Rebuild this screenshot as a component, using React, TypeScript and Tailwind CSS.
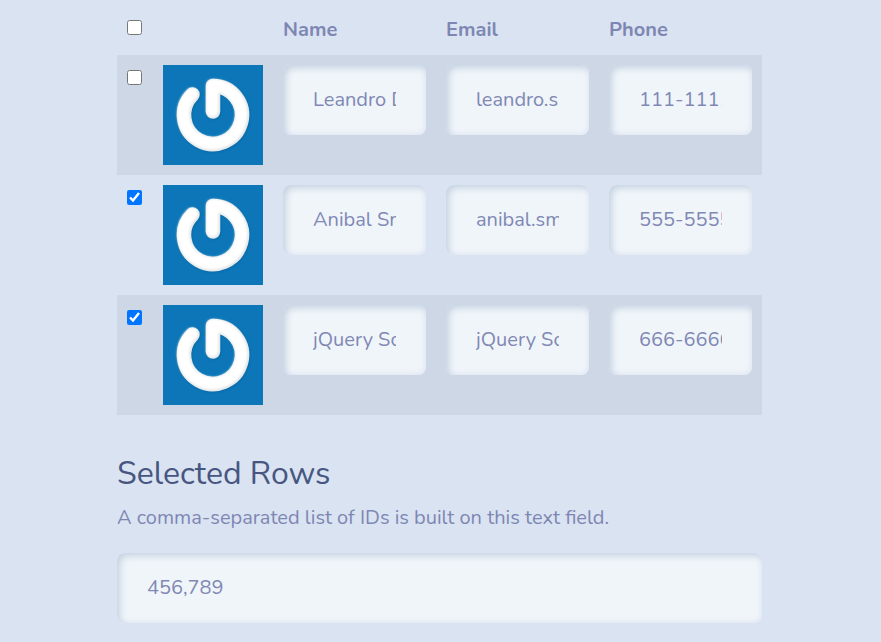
import { useState } from 'react';

const contacts = [
  { id: '123', name: 'Leandro Diaz', email: 'leandro.s', phone: '111-1111-111' },
  { id: '456', name: 'Anibal Smith', email: 'anibal.smith@example.com', phone: '555-5555-555' },
  { id: '789', name: 'jQuery Script', email: 'jQuery Script', phone: '666-6666-666' },
];

const fieldClass =
  'block h-[70px] w-full rounded-lg bg-[#f0f5fa] px-[30px] pb-[2px] text-xl text-[#8088b4] outline-none shadow-[inset_3px_3px_7px_#c5d2e2,inset_-2px_-2px_5px_#eaeef7]';

function Avatar() {
  const ring = 'M50 46.5V21A29 29 0 1 1 29.5 29.5';
  return (
    <svg viewBox="0 0 100 100" className="block size-[100px] bg-[#0c76b8]" role="img" aria-label="Avatar">
      <defs>
        <filter id="soft" x="-20%" y="-20%" width="140%" height="140%">
          <feGaussianBlur stdDeviation="1.2" />
        </filter>
      </defs>
      <g fill="none" strokeLinecap="round" strokeLinejoin="round">
        <path d={ring} stroke="#085686" strokeWidth="14.5" opacity="0.45" filter="url(#soft)" transform="translate(0.4 0.8)" />
        <path d={ring} stroke="#e3e7e9" strokeWidth="14.5" />
        <path d={ring} stroke="#fff" strokeWidth="12" filter="url(#soft)" transform="translate(-0.8 -0.8)" />
      </g>
    </svg>
  );
}

export default function App() {
  const [rows, setRows] = useState(contacts);
  const [selected, setSelected] = useState<string[]>(['456', '789']);

  const toggle = (id: string) =>
    setSelected(rows.map(r => r.id).filter(r => (r === id ? !selected.includes(r) : selected.includes(r))));

  const edit = (id: string, key: 'name' | 'email' | 'phone', value: string) =>
    setRows(rows.map(r => (r.id === id ? { ...r, [key]: value } : r)));

  return (
    <main className="min-h-screen bg-[#dae3f1] pt-1 pr-[119px] pb-5 pl-[117px] font-['Nunito','Lato',sans-serif] text-xl text-[#7e87b3]">
      <table className="w-full table-fixed border-collapse">
        <thead>
          <tr className="h-[51px] text-left">
            <th className="w-[36px] pl-[10px]">
              <input
                type="checkbox"
                aria-label="Select all rows"
                className="mb-1 block size-[15px]"
                checked={selected.length === rows.length}
                onChange={e => setSelected(e.target.checked ? rows.map(r => r.id) : [])}
              />
            </th>
            <th className="w-[120px]" />
            <th className="px-[10px] font-bold">Name</th>
            <th className="px-[10px] font-bold">Email</th>
            <th className="px-[10px] font-bold">Phone</th>
          </tr>
        </thead>
        <tbody>
          {rows.map(row => (
            <tr key={row.id} className="align-top odd:bg-[#cdd7e6]">
              <td className="pt-[15px] pl-[10px]">
                <input
                  type="checkbox"
                  aria-label={`Select ${row.name}`}
                  className="block size-[15px]"
                  checked={selected.includes(row.id)}
                  onChange={() => toggle(row.id)}
                />
              </td>
              <td className="p-[10px]">
                <Avatar />
              </td>
              {(['name', 'email', 'phone'] as const).map(key => (
                <td key={key} className="p-[10px]">
                  <input
                    type="text"
                    aria-label={key}
                    value={row[key]}
                    onChange={e => edit(row.id, key, e.target.value)}
                    className={fieldClass}
                  />
                </td>
              ))}
            </tr>
          ))}
        </tbody>
      </table>

      <h2 className="mt-10 text-[32px] leading-[38px] text-[#475681]">Selected Rows</h2>
      <label htmlFor="selected-ids" className="mt-[10px] mb-5 block leading-[30px]">
        A comma-separated list of IDs is built on this text field.
      </label>
      <input id="selected-ids" type="text" readOnly value={selected.join(',')} className={fieldClass} />
    </main>
  );
}
